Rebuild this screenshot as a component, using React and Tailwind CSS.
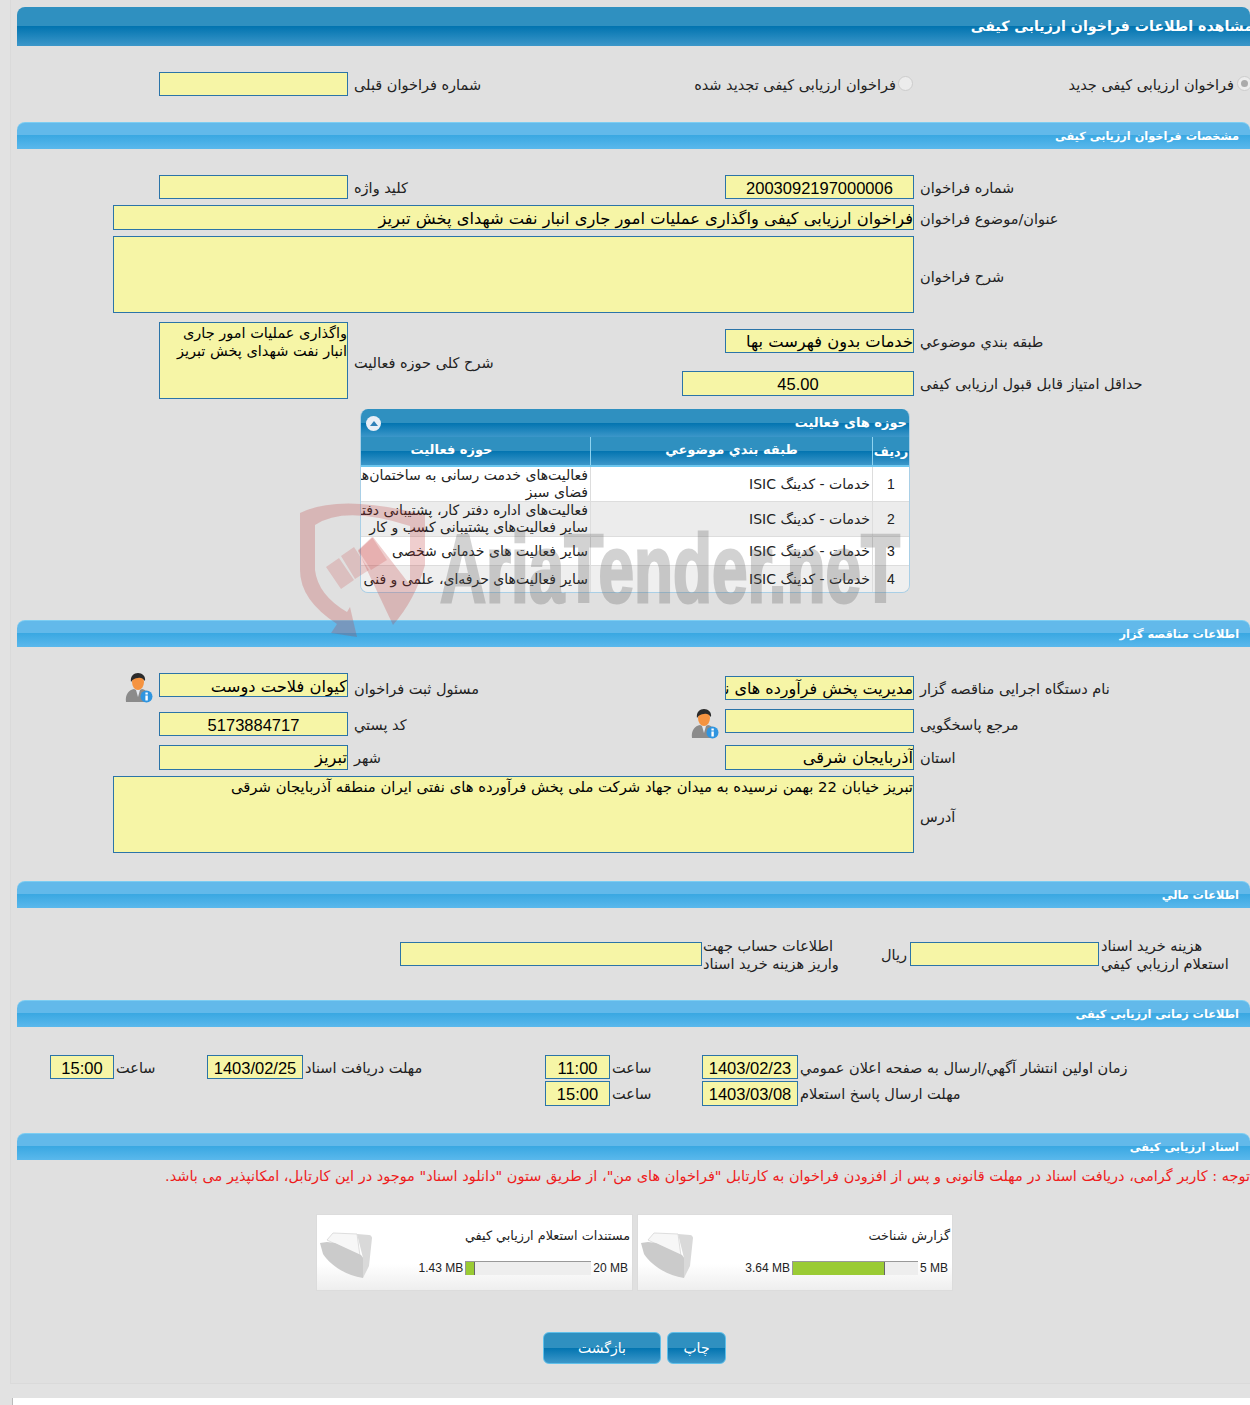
const fieldBox = 'bg-[#f6f5a6] border border-[#2b74a8] overflow-hidden text-black'
const sectionBg = 'bg-[linear-gradient(#62b9ea_0%,#62b9ea_48%,#3aa8e2_48%,#5ab8ec_100%)]'
const darkBg = 'bg-[linear-gradient(#2f90c0_0%,#2f90c0_50%,#0274b0_50%,#3c97c9_100%)]'

function Section({ title }) {
  return (
    <div dir="rtl" className={`h-[27px] w-[1233px] rounded-t-lg border-t border-[#7ccdf2] pr-[11px] text-[11.3px] font-bold leading-[27px] text-white ${sectionBg}`}>
      {title}
    </div>
  )
}

function Label({ children, className = '' }) {
  return <div dir="rtl" className={`whitespace-nowrap text-left text-[14.5px] leading-[26px] text-[#222] ${className}`}>{children}</div>
}

function TwoLines({ children, className = '' }) {
  return <div dir="rtl" className={`-mt-[5px] whitespace-nowrap text-left text-[14.5px] leading-[18px] text-[#222] ${className}`}>{children}</div>
}

function Num({ children, className = '' }) {
  return <div className={`${fieldBox} h-[24px] text-center font-['Liberation_Sans'] text-[16.5px] leading-[24px] ${className}`}>{children}</div>
}

function Text({ children, className = '' }) {
  return <div dir="rtl" className={`${fieldBox} h-[24px] whitespace-nowrap text-[16.3px] leading-[24px] ${className}`}>{children}</div>
}

function Person() {
  return (
    <svg width="28" height="30" viewBox="0 0 28 30" className="shrink-0">
      <path d="M1 29c-1-8 3-12 8-13l4 2 4-2c5 1 7 5 7 13z" fill="#8b8b8b" />
      <path d="M11 17l2 7 2-7z" fill="#e4e8ee" />
      <ellipse cx="13" cy="9" rx="6" ry="8" fill="#f59340" />
      <path d="M6 9C5 3 9 0 13 0s8 3 7 8c-2-3-5-4-7-3-3 0-5 1-7 4z" fill="#2b2b2b" />
      <circle cx="21.5" cy="23.5" r="6" fill="#2f95e0" />
      <rect x="20.4" y="22.5" width="2.4" height="5" fill="#fff" />
      <rect x="20.4" y="19.5" width="2.4" height="2" fill="#fff" />
    </svg>
  )
}

function Folder() {
  return (
    <svg width="54" height="50" viewBox="0 0 54 50" className="shrink-0">
      <path d="M8 10L14 3l24 1 3 22z" fill="#f7f7f7" stroke="#dedede" />
      <path d="M1 13l7-1 8 1 26 12 3 4-1 19c-18-3-33-13-40-24z" fill="#cbcbcb" />
      <path d="M38 4l12 1c2 0 3 2 3 3l-3 28-6 12 0-20z" fill="#d9d9d9" />
    </svg>
  )
}

function DocCard({ title, max, used, fill, className = '' }) {
  return (
    <div className={`flex h-[77px] border border-[#dcdcdc] bg-[linear-gradient(#fff_0%,#fff_65%,#eee_100%)] pl-[2px] ${className}`}>
      <div className="mt-[15px]">
        <Folder />
      </div>
      <div className="flex-1">
        <div dir="rtl" className="mt-[12px] pr-[2px] text-[12.8px] leading-[18px] text-[#222]">{title}</div>
        <div className="mt-[16px] flex h-[14px] items-center justify-end gap-[2px] whitespace-nowrap pr-[4px] font-['Liberation_Sans'] text-[12px] text-[#222]">
          <span>{used}</span>
          <div className="h-[14px] w-[126px] shrink-0 border-t border-l border-[#999] bg-[#eee]">
            <div className="h-full border-r border-[#666] bg-[#9acb34]" style={{ width: fill }} />
          </div>
          <span>{max}</span>
        </div>
      </div>
    </div>
  )
}

const rows = [
  { id: 1, h: 'h-[35px]', bg: 'bg-white', lines: ['فعالیت‌های خدمت رسانی به ساختمان‌ها و', 'فضای سبز'] },
  { id: 2, h: 'h-[35px]', bg: 'bg-[#ececec]', lines: ['فعالیت‌های  اداره دفتر کار، پشتیبانی دفتری و', 'سایر  فعالیت‌های پشتیبانی کسب و کار'] },
  { id: 3, h: 'h-[29px]', bg: 'bg-white', lines: ['سایر فعالیت های خدماتی شخصی'] },
  { id: 4, h: 'h-[28px]', bg: 'bg-[#efefef]', lines: ['سایر فعالیت‌های حرفه‌ای، علمی و فنی'] },
]

function ActivityTable() {
  return (
    <div dir="rtl" className="ml-[343px] mt-[10px] h-[184px] w-[550px] overflow-hidden rounded-lg border-x border-b border-[#a9cfe6] text-[14px] text-[#222]">
      <div className={`flex h-[28px] items-center justify-between pl-[3px] pr-[2px] text-[13px] font-bold text-white ${darkBg}`}>
        <span>حوزه های فعالیت</span>
        <span className="ml-[2px] flex h-[15px] w-[15px] items-center justify-center rounded-full bg-[#e8eef6]">
          <span className="h-0 w-0 border-x-[4px] border-b-[5px] border-x-transparent border-b-[#2f80b8]" />
        </span>
      </div>
      <div className={`flex h-[30px] border-b-2 border-[#6cc6ee] text-[13px] font-bold leading-[26px] text-white ${darkBg}`}>
        <div className="w-[37px] border-l border-[#8fd3f0] pt-[2px] text-center">ردیف</div>
        <div className="w-[282px] border-l border-[#8fd3f0] text-center">طبقه بندي موضوعي</div>
        <div className="flex-1 pr-[48px] text-center">حوزه فعالیت</div>
      </div>
      {rows.map((row) => (
        <div key={row.id} className={`flex border-b border-[#ddd] ${row.h} ${row.bg}`}>
          <div className="flex w-[37px] items-center justify-center border-l border-[#ddd] font-['Liberation_Sans'] text-[14px]">{row.id}</div>
          <div className="flex w-[282px] items-center border-l border-[#ddd] pr-[2px]">خدمات - کدینگ ISIC</div>
          <div className="flex flex-1 flex-col justify-center overflow-hidden pr-[2px] leading-[17px]">
            {row.lines.map((line) => (
              <div key={line} className="whitespace-nowrap">{line}</div>
            ))}
          </div>
        </div>
      ))}
    </div>
  )
}

function Watermark() {
  return (
    <svg viewBox="0 0 1250 1405" className="pointer-events-none absolute left-0 top-0 h-[1405px] w-[1250px]">
      <path
        d="M300 513Q340 493 425 515L425 565Q415 600 393 625L358 551L373 537L410 585L410 526Q345 505 315 525L315 570Q318 595 347 612L350 607L357 637L331 633L337 624Q300 600 300 570Z"
        fill="rgba(190,50,50,0.24)"
      />
      <path d="M326 567L339 558L354 580L341 589ZM341 556L354 547L369 570L355 579ZM358 550L372 537L387 560L371 570Z" fill="rgba(200,60,60,0.2)" />
      <g opacity="0.26">
        <text x="440" y="602" textLength="460" lengthAdjust="spacingAndGlyphs" fontFamily="Liberation Sans" fontWeight="700" fontSize="96" fill="#555" stroke="#555" strokeWidth="3">
          AriaTender.neT
        </text>
      </g>
    </svg>
  )
}

export default function App() {
  return (
    <div className="relative h-[1405px] w-[1250px] overflow-hidden bg-[#e2e2e2] font-['DejaVu_Sans',sans-serif]">
      <div className="ml-[10px] h-[1384px] w-[1260px] border-b border-l border-[#dadada] bg-[#e0e0e0] pl-[6px] pt-[7px]">
        <div dir="rtl" className={`h-[39px] w-[1233px] whitespace-nowrap rounded-t-lg text-[14.2px] font-bold leading-[38px] text-white ${darkBg}`}>
          <div className="-mr-[3px]">مشاهده اطلاعات فراخوان ارزیابی کیفی</div>
        </div>

        <div className="mt-[26px] flex h-[24px] w-[1233px]">
          <div className="flex w-[671px] gap-[6px] pl-[142px]">
            <Text className="w-[189px]" />
            <Label>شماره فراخوان قبلی</Label>
          </div>
          <div className="flex w-[378px] items-start">
            <Label className="w-[210px] pr-[2px] text-right">فراخوان ارزیابی کیفی تجدید شده</Label>
            <span className="mt-[4px] h-[15px] w-[15px] rounded-full border border-[#ccc] bg-[#ececec]" />
          </div>
          <div className="flex flex-1 items-start justify-end">
            <Label>فراخوان ارزیابی کیفی جدید</Label>
            <span className="-mr-[2px] ml-[3px] mt-[4px] flex h-[15px] w-[15px] shrink-0 items-center justify-center rounded-full border border-[#ccc] bg-[#ececec]">
              <span className="h-[7px] w-[7px] rounded-full bg-[#aaa]" />
            </span>
          </div>
        </div>

        <div className="mt-[26px]">
          <Section title="مشخصات فراخوان ارزیابی کیفی" />
        </div>

        <div className="mt-[26px] flex h-[24px]">
          <div className="flex w-[708px] gap-[6px] pl-[142px]">
            <Text className="w-[189px]" />
            <Label>کلید واژه</Label>
          </div>
          <div className="flex gap-[6px]">
            <Num className="w-[189px]">2003092197000006</Num>
            <Label>شماره فراخوان</Label>
          </div>
        </div>

        <div className="mt-[6px] flex h-[25px] gap-[6px] pl-[96px]">
          <Text className="h-[25px] w-[801px] leading-[26px]">فراخوان ارزیابی کیفی واگذاری عملیات امور جاری انبار نفت شهدای پخش تبریز</Text>
          <Label className="mt-[1px]">عنوان/موضوع فراخوان</Label>
        </div>

        <div className="mt-[6px] flex h-[77px] items-center gap-[6px] pl-[96px]">
          <div className={`${fieldBox} h-[77px] w-[801px]`} />
          <Label className="mt-[4px]">شرح فراخوان</Label>
        </div>

        <div className="mt-[9px] flex h-[77px]">
          <div className="flex w-[665px] gap-[6px] pl-[142px]">
            <div dir="rtl" className={`${fieldBox} h-[77px] w-[189px] whitespace-nowrap pt-[1px] text-[14.5px] leading-[18px]`}>
              واگذاری عملیات امور جاری<br />انبار نفت شهدای پخش تبریز
            </div>
            <Label className="mt-[4px] self-center">شرح کلی حوزه فعالیت</Label>
          </div>
          <div className="pt-[7px]">
            <div className="ml-[43px] flex h-[24px] gap-[6px]">
              <Text className="w-[189px]">خدمات بدون فهرست بها</Text>
              <Label>طبقه بندي موضوعي</Label>
            </div>
            <div className="mt-[18px] flex h-[25px] gap-[6px]">
              <Num className="h-[25px] w-[232px]">45.00</Num>
              <Label>حداقل امتیاز قابل قبول ارزیابی کیفی</Label>
            </div>
          </div>
        </div>

        <ActivityTable />

        <div className="mt-[27px]">
          <Section title="اطلاعات مناقصه گزار" />
        </div>

        <div className="mt-[26px] flex h-[24px]">
          <div className="flex w-[708px] pl-[108px]">
            <Person />
            <Text className="ml-[6px] w-[189px] leading-[25px]">کیوان فلاحت دوست</Text>
            <Label className="ml-[6px] mt-[3px]">مسئول ثبت فراخوان</Label>
          </div>
          <div className="mt-[3px] flex gap-[6px]">
            <Text className="w-[189px] text-[16px]!">مدیریت پخش فرآورده های نفتی تبریز</Text>
            <Label>نام دستگاه اجرایی مناقصه گزار</Label>
          </div>
        </div>

        <div className="mt-[12px] flex h-[24px]">
          <div className="mt-[3px] flex w-[674px] gap-[6px] pl-[142px]">
            <Num className="w-[189px]">5173884717</Num>
            <Label>کد پستي</Label>
          </div>
          <Person />
          <div className="ml-[6px] flex gap-[6px]">
            <Text className="w-[189px]" />
            <Label className="mt-[3px]">مرجع پاسخگویی</Label>
          </div>
        </div>

        <div className="mt-[12px] flex h-[25px]">
          <div className="flex w-[708px] gap-[6px] pl-[142px]">
            <Text className="h-[25px] w-[189px]">تبریز</Text>
            <Label>شهر</Label>
          </div>
          <div className="flex gap-[6px]">
            <Text className="h-[25px] w-[189px]">آذربایجان شرقی</Text>
            <Label>استان</Label>
          </div>
        </div>

        <div className="mt-[6px] flex h-[77px] items-center gap-[6px] pl-[96px]">
          <div dir="rtl" className={`${fieldBox} h-[77px] w-[801px] text-[14.8px] leading-[20px]`}>
            تبریز خیابان 22 بهمن نرسیده به میدان جهاد شرکت ملی پخش فرآورده های نفتی ایران منطقه آذربایجان شرقی
          </div>
          <Label className="mt-[4px]">آدرس</Label>
        </div>

        <div className="mt-[28px]">
          <Section title="اطلاعات مالي" />
        </div>

        <div className="mt-[34px] flex h-[24px] pl-[383px]">
          <Text className="w-[302px]" />
          <TwoLines className="ml-[1px] w-[178px]">اطلاعات حساب جهت<br />واریز هزینه خرید اسناد</TwoLines>
          <Label className="w-[29px] text-center">ریال</Label>
          <Text className="w-[189px]" />
          <TwoLines className="ml-[2px]">هزینه خرید اسناد<br />استعلام ارزیابي کیفي</TwoLines>
        </div>

        <div className="mt-[34px]">
          <Section title="اطلاعات زمانی ارزیابی کیفی" />
        </div>

        <div className="mt-[28px] flex h-[24px] pl-[33px]">
          <Num className="w-[64px] shrink-0">15:00</Num>
          <Label className="ml-[2px] w-[91px]">ساعت</Label>
          <Num className="w-[96px] shrink-0">1403/02/25</Num>
          <Label className="ml-[2px] w-[240px]">مهلت دریافت اسناد</Label>
          <Num className="w-[65px] shrink-0">11:00</Num>
          <Label className="ml-[2px] w-[90px]">ساعت</Label>
          <Num className="w-[96px] shrink-0">1403/02/23</Num>
          <Label className="ml-[2px]">زمان اولین انتشار آگهي/ارسال به صفحه اعلان عمومي</Label>
        </div>

        <div className="mt-[2px] flex h-[25px] pl-[528px]">
          <Num className="h-[25px] w-[65px] shrink-0">15:00</Num>
          <Label className="ml-[2px] w-[90px]">ساعت</Label>
          <Num className="h-[25px] w-[96px] shrink-0">1403/03/08</Num>
          <Label className="ml-[2px]">مهلت ارسال پاسخ استعلام</Label>
        </div>

        <div className="mt-[27px]">
          <Section title="اسناد ارزیابی کیفی" />
        </div>

        <div dir="rtl" className="mt-[6px] h-[20px] w-[1233px] whitespace-nowrap text-[14.5px] leading-[20px] text-[#ee1c1c]">
          توجه : کاربر گرامی، دریافت اسناد در مهلت قانونی و پس از افزودن فراخوان به کارتابل "فراخوان های من"، از طریق ستون "دانلود اسناد" موجود در این کارتابل، امکانپذیر می باشد.
        </div>

        <div className="ml-[299px] mt-[28px] flex gap-[4px]">
          <DocCard className="w-[317px]" title="مستندات استعلام ارزیابي کیفي" used="1.43 MB" max="20 MB" fill="7%" />
          <DocCard className="w-[316px]" title="گزارش شناخت" used="3.64 MB" max="5 MB" fill="74%" />
        </div>

        <div className="ml-[526px] mt-[41px] flex gap-[6px]">
          <button className={`h-[32px] w-[118px] rounded-md border border-[#5fc0ea] pt-[1px] text-[14px] text-white ${darkBg}`}>بازگشت</button>
          <button className={`h-[32px] w-[59px] rounded-md border border-[#5fc0ea] pt-[1px] text-[14px] text-white ${darkBg}`}>چاپ</button>
        </div>
      </div>
      <div className="ml-[12px] mt-[14px] h-[8px] border-l border-[#bbb] bg-white" />
      <Watermark />
    </div>
  )
}
